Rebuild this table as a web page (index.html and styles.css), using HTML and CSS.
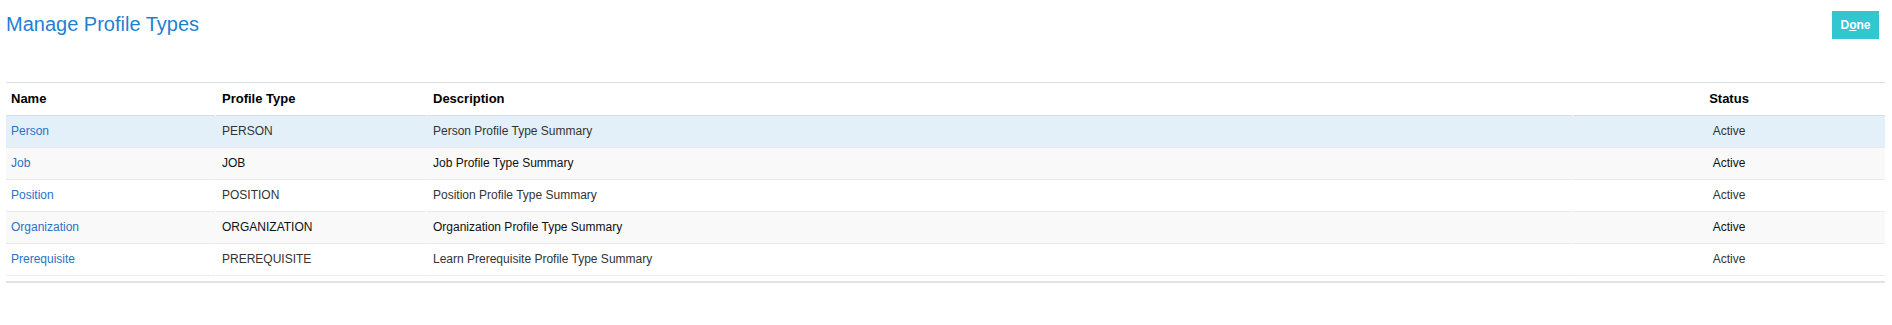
FILE: index.html
```html
<!DOCTYPE html>
<html lang="en">
<head>
<meta charset="utf-8">
<title>Manage Profile Types</title>
<link rel="stylesheet" href="styles.css">
</head>
<body>
<div class="page">
  <div class="page-header">
    <h1 class="title">Manage Profile Types</h1>
    <button class="done-btn" type="button">D<span class="accel">o</span>ne</button>
  </div>
  <div class="table">
    <div class="row head">
      <div class="cell">Name</div>
      <div class="cell">Profile Type</div>
      <div class="cell">Description</div>
      <div class="cell center">Status</div>
    </div>
    <div class="row selected">
      <div class="cell"><a class="link" href="#">Person</a></div>
      <div class="cell">PERSON</div>
      <div class="cell">Person Profile Type Summary</div>
      <div class="cell center">Active</div>
    </div>
    <div class="row alt">
      <div class="cell"><a class="link" href="#">Job</a></div>
      <div class="cell">JOB</div>
      <div class="cell">Job Profile Type Summary</div>
      <div class="cell center">Active</div>
    </div>
    <div class="row">
      <div class="cell"><a class="link" href="#">Position</a></div>
      <div class="cell">POSITION</div>
      <div class="cell">Position Profile Type Summary</div>
      <div class="cell center">Active</div>
    </div>
    <div class="row alt">
      <div class="cell"><a class="link" href="#">Organization</a></div>
      <div class="cell">ORGANIZATION</div>
      <div class="cell">Organization Profile Type Summary</div>
      <div class="cell center">Active</div>
    </div>
    <div class="row">
      <div class="cell"><a class="link" href="#">Prerequisite</a></div>
      <div class="cell">PREREQUISITE</div>
      <div class="cell">Learn Prerequisite Profile Type Summary</div>
      <div class="cell center">Active</div>
    </div>
  </div>
</div>
</body>
</html>
```

FILE: styles.css
```css
html, body {
  margin: 0;
  padding: 0;
  background: #ffffff;
}

body {
  font-family: "Liberation Sans", Arial, Helvetica, sans-serif;
  color: #333333;
}

.page {
  padding: 11px 13px 0 6px;
}

.page-header {
  display: flex;
  justify-content: space-between;
  align-items: flex-start;
  height: 28px;
}

.title {
  margin: 2px 0 0 0;
  font-size: 20px;
  line-height: 23px;
  font-weight: normal;
  color: #1f7fd2;
}

.done-btn {
  width: 47px;
  height: 28px;
  border: none;
  padding: 0;
  margin: 0 0 0 0;
  background: #33c5d0;
  color: #ffffff;
  font-family: "Liberation Sans", Arial, Helvetica, sans-serif;
  font-size: 12px;
  font-weight: bold;
  cursor: pointer;
}

.accel {
  text-decoration: underline;
}

.table {
  margin-top: 43px;
  border-top: 1px solid #d9e0e6;
  width: 1879px;
}

.table::after {
  content: "";
  display: block;
  height: 2px;
  margin-top: 5px;
  background: #dfe4e8;
}

.row {
  display: grid;
  grid-template-columns: 209px 210px 1145px 312px;
  column-gap: 1px;
  font-size: 12px;
}

.cell {
  height: 31px;
  line-height: 31px;
  padding: 0 6px;
  border-bottom: 1px solid #eaeaea;
  white-space: nowrap;
  overflow: hidden;
}

.cell:first-child {
  padding-left: 5px;
}

.center {
  text-align: center;
}

.head .cell {
  height: 32px;
  line-height: 32px;
  font-size: 13px;
  font-weight: bold;
  color: #000000;
  border-bottom-color: #d6dfe6;
}

.selected {
  background: #e3f0fa;
}

.alt {
  background: #f9f9f9;
  color: #111111;
}

.link {
  color: #2a73c5;
  text-decoration: none;
}
```
